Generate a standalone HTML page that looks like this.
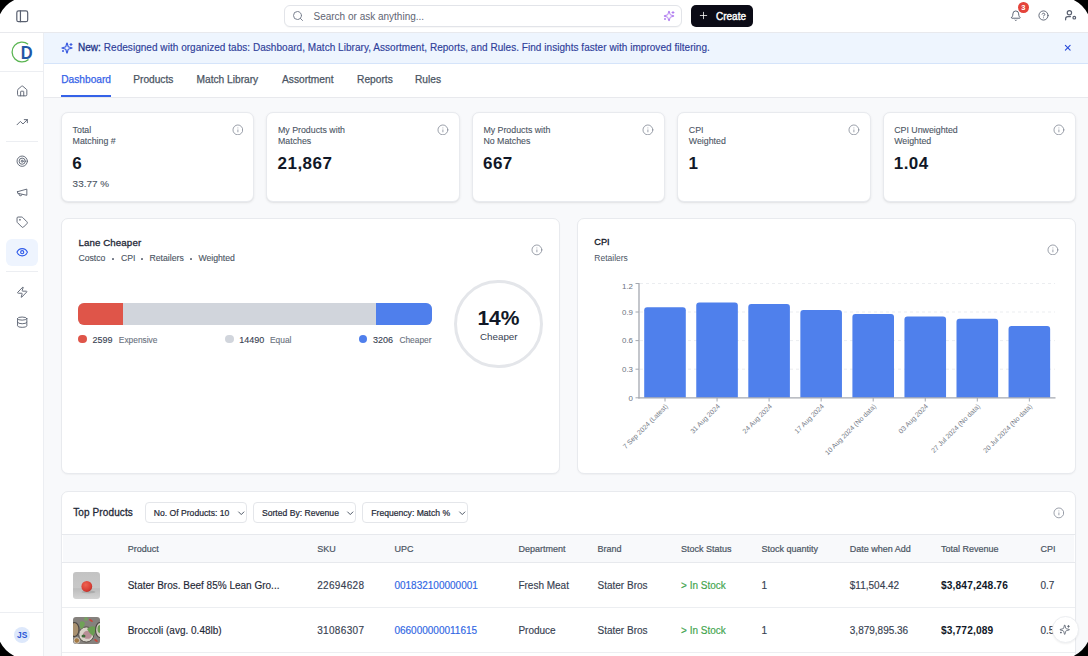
<!DOCTYPE html>
<html><head><meta charset="utf-8">
<style>
*{box-sizing:border-box;margin:0;padding:0}
html,body{width:1088px;height:656px;overflow:hidden;background:#000}
body{font-family:"Liberation Sans", sans-serif;color:#111827}
#win{position:absolute;left:0;top:0;width:1088px;height:656px;background:#f8f9fb;overflow:hidden}
.a{position:absolute}
.t{position:absolute;white-space:nowrap}
.card{position:absolute;background:#fff;border:1px solid #e8eaee;border-radius:7px;box-shadow:0 1px 1.5px rgba(0,0,0,.04)}
.kc{box-shadow:0 1px 3px rgba(0,0,0,.07),0 1px 1px rgba(0,0,0,.03)}
</style></head><body>
<div id="win">
<div class="a" style="left:0px;top:0px;width:1088px;height:32px;background:#fff"></div>
<div class="a" style="left:0px;top:32px;width:1088px;height:1px;background:#e8e9ed"></div>
<svg class="a" style="left:14.75px;top:8.55px;" width="14.5" height="14.5" viewBox="0 0 24 24" fill="none" stroke="#596070" stroke-width="2" stroke-linecap="round" stroke-linejoin="round"><rect width="18" height="18" x="3" y="3" rx="3"/><path d="M9 3v18"/></svg>
<div class="a" style="left:284px;top:5px;width:398px;height:22px;border:1px solid #e2e4e9;border-radius:6px;background:#fff;box-shadow:0 1px 1px rgba(0,0,0,.03)"></div>
<svg class="a" style="left:292.00px;top:9.50px;" width="12" height="12" viewBox="0 0 24 24" fill="none" stroke="#7a8190" stroke-width="2" stroke-linecap="round" stroke-linejoin="round"><circle cx="11" cy="11" r="8"/><path d="m21 21-4.3-4.3"/></svg>
<div class="t" style="left:313.50px;top:12.10px;font-size:10px;line-height:10px;color:#5f6573;">Search or ask anything...</div>
<svg class="a" style="left:663.00px;top:9.80px;" width="12" height="12" viewBox="0 0 24 24" fill="none" stroke="#b07cf0" stroke-width="2" stroke-linecap="round" stroke-linejoin="round"><path d="M9.937 15.5A2 2 0 0 0 8.5 14.063l-6.135-1.582a.5.5 0 0 1 0-.962L8.5 9.936A2 2 0 0 0 9.937 8.5l1.582-6.135a.5.5 0 0 1 .963 0L14.063 8.5A2 2 0 0 0 15.5 9.937l6.135 1.581a.5.5 0 0 1 0 .964L15.5 14.063a2 2 0 0 0-1.437 1.437l-1.582 6.135a.5.5 0 0 1-.963 0z"/><path d="M20 3v4"/><path d="M22 5h-4"/><path d="M4 17v2"/><path d="M5 18H3"/></svg>
<div class="a" style="left:691px;top:5px;width:62px;height:21.5px;border-radius:5px;background:#0b0b16"></div>
<svg class="a" style="left:697.80px;top:10.40px;" width="11" height="11" viewBox="0 0 24 24" fill="none" stroke="#fff" stroke-width="1.7" stroke-linecap="round" stroke-linejoin="round"><path d="M5 12h14"/><path d="M12 5v14"/></svg>
<div class="t" style="left:716.00px;top:12.00px;font-size:10px;line-height:10px;color:#fff;-webkit-text-stroke:0.4px currentColor">Create</div>
<svg class="a" style="left:1009.50px;top:10.20px;" width="11.6" height="11.6" viewBox="0 0 24 24" fill="none" stroke="#596070" stroke-width="2" stroke-linecap="round" stroke-linejoin="round"><path d="M10.268 21a2 2 0 0 0 3.464 0"/><path d="M3.262 15.326A1 1 0 0 0 4 17h16a1 1 0 0 0 .74-1.673C19.41 13.956 18 12.499 18 8A6 6 0 0 0 6 8c0 4.499-1.411 5.956-2.738 7.326"/></svg>
<div class="a" style="left:1018px;top:2.3px;width:10.8px;height:10.8px;border-radius:50%;background:#e4443b"></div>
<div class="t" style="left:823.40px;width:400px;text-align:center;top:4.02px;font-size:7.5px;line-height:7.5px;color:#fff;font-weight:700;">3</div>
<svg class="a" style="left:1037.60px;top:10.40px;" width="11" height="11" viewBox="0 0 24 24" fill="none" stroke="#596070" stroke-width="2" stroke-linecap="round" stroke-linejoin="round"><circle cx="12" cy="12" r="10"/><path d="M9.09 9a3 3 0 0 1 5.83 1c0 2-3 3-3 3"/><path d="M12 17h.01"/></svg>
<svg class="a" style="left:1064.00px;top:9.00px;" width="13" height="13" viewBox="0 0 24 24" fill="none" stroke="#596070" stroke-width="2.2" stroke-linecap="round" stroke-linejoin="round"><circle cx="10" cy="7" r="4"/><path d="M12 14H7a4 4 0 0 0-4 4v2"/><circle cx="19" cy="16" r="2.5"/></svg>
<div class="a" style="left:0px;top:33px;width:43px;height:623px;background:#fff"></div>
<div class="a" style="left:43px;top:33px;width:1px;height:623px;background:#eceef2"></div>
<svg class="a" style="left:9.9px;top:40.1px" width="24" height="24" viewBox="0 0 24 24" overflow="visible"><path d="M18.1 4.2 A9.9 9.9 0 1 0 18.5 19.47" fill="none" stroke="#5ab552" stroke-width="1.3"/><text transform="translate(10.7 18.65) scale(0.92 1)" x="0" y="0" font-family="Liberation Sans" font-weight="700" font-size="17.9" fill="#2157a6">D</text></svg>
<div class="a" style="left:0px;top:71px;width:43px;height:1px;background:#eceef2"></div>
<svg class="a" style="left:15.80px;top:84.80px;" width="12.4" height="12.4" viewBox="0 0 24 24" fill="none" stroke="#5b6271" stroke-width="1.8" stroke-linecap="round" stroke-linejoin="round"><path d="M15 21v-8a1 1 0 0 0-1-1h-4a1 1 0 0 0-1 1v8"/><path d="M3 10a2 2 0 0 1 .709-1.528l7-5.999a2 2 0 0 1 2.582 0l7 5.999A2 2 0 0 1 21 10v9a2 2 0 0 1-2 2H5a2 2 0 0 1-2-2z"/></svg>
<svg class="a" style="left:15.80px;top:115.80px;" width="12.4" height="12.4" viewBox="0 0 24 24" fill="none" stroke="#5b6271" stroke-width="1.8" stroke-linecap="round" stroke-linejoin="round"><polyline points="22 7 13.5 15.5 8.5 10.5 2 17"/><polyline points="16 7 22 7 22 13"/></svg>
<svg class="a" style="left:15.80px;top:155.00px;" width="12.4" height="12.4" viewBox="0 0 24 24" fill="none" stroke="#5b6271" stroke-width="1.8" stroke-linecap="round" stroke-linejoin="round"><circle cx="12" cy="12" r="10"/><circle cx="12" cy="12" r="6"/><circle cx="12" cy="12" r="2"/></svg>
<svg class="a" style="left:15.80px;top:185.50px;" width="12.4" height="12.4" viewBox="0 0 24 24" fill="none" stroke="#5b6271" stroke-width="1.8" stroke-linecap="round" stroke-linejoin="round"><path d="m3 11 18-5v12L3 14v-3z"/><path d="M11.6 16.8a3 3 0 1 1-5.8-1.6"/></svg>
<svg class="a" style="left:15.80px;top:215.80px;" width="12.4" height="12.4" viewBox="0 0 24 24" fill="none" stroke="#5b6271" stroke-width="1.8" stroke-linecap="round" stroke-linejoin="round"><path d="M12.586 2.586A2 2 0 0 0 11.172 2H4a2 2 0 0 0-2 2v7.172a2 2 0 0 0 .586 1.414l8.704 8.704a2.426 2.426 0 0 0 3.42 0l6.58-6.58a2.426 2.426 0 0 0 0-3.42z"/><circle cx="7.5" cy="7.5" r=".5" fill="#5b6271"/></svg>
<svg class="a" style="left:15.80px;top:285.80px;" width="12.4" height="12.4" viewBox="0 0 24 24" fill="none" stroke="#5b6271" stroke-width="1.8" stroke-linecap="round" stroke-linejoin="round"><path d="M4 14a1 1 0 0 1-.78-1.63l9.9-10.2a.5.5 0 0 1 .86.46l-1.92 6.02A1 1 0 0 0 13 10h7a1 1 0 0 1 .78 1.63l-9.9 10.2a.5.5 0 0 1-.86-.46l1.92-6.02A1 1 0 0 0 11 14z"/></svg>
<svg class="a" style="left:15.80px;top:315.80px;" width="12.4" height="12.4" viewBox="0 0 24 24" fill="none" stroke="#5b6271" stroke-width="1.8" stroke-linecap="round" stroke-linejoin="round"><ellipse cx="12" cy="5" rx="9" ry="3"/><path d="M3 5V19A9 3 0 0 0 21 19V5"/><path d="M3 12A9 3 0 0 0 21 12"/></svg>
<div class="a" style="left:6px;top:141px;width:32px;height:1px;background:#eceef2"></div>
<div class="a" style="left:6px;top:239px;width:32px;height:27px;background:#eef4fe;border-radius:6px"></div>
<svg class="a" style="left:15.80px;top:246.00px;" width="12.4" height="12.4" viewBox="0 0 24 24" fill="none" stroke="#2f5bea" stroke-width="2.2" stroke-linecap="round" stroke-linejoin="round"><path d="M2.062 12.348a1 1 0 0 1 0-.696 10.75 10.75 0 0 1 19.876 0 1 1 0 0 1 0 .696 10.75 10.75 0 0 1-19.876 0"/><circle cx="12" cy="12" r="3"/></svg>
<div class="a" style="left:6px;top:271px;width:32px;height:1px;background:#eceef2"></div>
<div class="a" style="left:0px;top:612px;width:43px;height:1px;background:#eceef2"></div>
<div class="a" style="left:13.8px;top:626.8px;width:16.4px;height:16.4px;border-radius:50%;background:#dde8fb"></div>
<div class="t" style="left:-177.80px;width:400px;text-align:center;top:630.80px;font-size:8.4px;line-height:8.4px;color:#2a55d6;font-weight:700;">JS</div>
<div class="a" style="left:44px;top:33px;width:1044px;height:30px;background:#eef5fe"></div>
<div class="a" style="left:44px;top:63px;width:1044px;height:1px;background:#d5e4fa"></div>
<svg class="a" style="left:60.50px;top:42.00px;" width="12" height="12" viewBox="0 0 24 24" fill="none" stroke="#3a5be0" stroke-width="2.3" stroke-linecap="round" stroke-linejoin="round"><path d="M9.937 15.5A2 2 0 0 0 8.5 14.063l-6.135-1.582a.5.5 0 0 1 0-.962L8.5 9.936A2 2 0 0 0 9.937 8.5l1.582-6.135a.5.5 0 0 1 .963 0L14.063 8.5A2 2 0 0 0 15.5 9.937l6.135 1.581a.5.5 0 0 1 0 .964L15.5 14.063a2 2 0 0 0-1.437 1.437l-1.582 6.135a.5.5 0 0 1-.963 0z"/><path d="M20 3v4"/><path d="M22 5h-4"/><path d="M4 17v2"/><path d="M5 18H3"/></svg>
<div class="t" style="left:78.00px;top:43.49px;font-size:10px;line-height:10px;color:#2e409a;letter-spacing:0.04px;-webkit-text-stroke:0.15px currentColor"><b style="color:#24358a;font-weight:400;-webkit-text-stroke:0.3px #24358a">New:</b> Redesigned with organized tabs: Dashboard, Match Library, Assortment, Reports, and Rules. Find insights faster with improved filtering.</div>
<svg class="a" style="left:1063.05px;top:43.15px;" width="9.5" height="9.5" viewBox="0 0 24 24" fill="none" stroke="#2448d8" stroke-width="2.6" stroke-linecap="round" stroke-linejoin="round"><path d="M18 6 6 18"/><path d="m6 6 12 12"/></svg>
<div class="a" style="left:44px;top:64px;width:1044px;height:33px;background:#fff"></div>
<div class="a" style="left:44px;top:97px;width:1044px;height:1px;background:#e8e9ed"></div>
<div class="t" style="left:61.20px;top:75.17px;font-size:10.2px;line-height:10.2px;color:#3562e8;-webkit-text-stroke:0.25px currentColor">Dashboard</div>
<div class="t" style="left:133.20px;top:75.17px;font-size:10.2px;line-height:10.2px;color:#4b5563;-webkit-text-stroke:0.25px currentColor">Products</div>
<div class="t" style="left:196.50px;top:75.17px;font-size:10.2px;line-height:10.2px;color:#4b5563;-webkit-text-stroke:0.25px currentColor">Match Library</div>
<div class="t" style="left:282.00px;top:75.17px;font-size:10.2px;line-height:10.2px;color:#4b5563;-webkit-text-stroke:0.25px currentColor">Assortment</div>
<div class="t" style="left:357.10px;top:75.17px;font-size:10.2px;line-height:10.2px;color:#4b5563;-webkit-text-stroke:0.25px currentColor">Reports</div>
<div class="t" style="left:415.00px;top:75.17px;font-size:10.2px;line-height:10.2px;color:#4b5563;-webkit-text-stroke:0.25px currentColor">Rules</div>
<div class="a" style="left:61px;top:95px;width:50px;height:2px;background:#3562e8"></div>
<div class="card kc" style="left:61px;top:112px;width:193.4px;height:90px"></div>
<div class="t" style="left:72.60px;top:126.25px;font-size:8.8px;line-height:8.8px;color:#4b5563;-webkit-text-stroke:0.1px currentColor;line-height:11.2px;top:125.05px">Total<br>Matching #</div>
<div class="t" style="left:72.20px;top:155.08px;font-size:17px;line-height:17px;color:#111827;font-weight:700;letter-spacing:0.45px">6</div>
<div class="t" style="left:72.60px;top:178.91px;font-size:9.9px;line-height:9.9px;color:#4b5563;letter-spacing:0.05px;-webkit-text-stroke:0.12px currentColor">33.77 %</div>
<svg class="a" style="left:231.60px;top:123.50px;" width="11.8" height="11.8" viewBox="0 0 24 24" fill="none" stroke="#7d8391" stroke-width="1.55" stroke-linecap="round" stroke-linejoin="round"><circle cx="12" cy="12" r="10"/><path d="M12 16v-4"/><path d="M12 8h.01"/></svg>
<div class="card kc" style="left:266.4px;top:112px;width:193.4px;height:90px"></div>
<div class="t" style="left:278.00px;top:126.25px;font-size:8.8px;line-height:8.8px;color:#4b5563;-webkit-text-stroke:0.1px currentColor;line-height:11.2px;top:125.05px">My Products with<br>Matches</div>
<div class="t" style="left:277.60px;top:155.08px;font-size:17px;line-height:17px;color:#111827;font-weight:700;letter-spacing:0.45px">21,867</div>
<svg class="a" style="left:437.00px;top:123.50px;" width="11.8" height="11.8" viewBox="0 0 24 24" fill="none" stroke="#7d8391" stroke-width="1.55" stroke-linecap="round" stroke-linejoin="round"><circle cx="12" cy="12" r="10"/><path d="M12 16v-4"/><path d="M12 8h.01"/></svg>
<div class="card kc" style="left:471.8px;top:112px;width:193.4px;height:90px"></div>
<div class="t" style="left:483.40px;top:126.25px;font-size:8.8px;line-height:8.8px;color:#4b5563;-webkit-text-stroke:0.1px currentColor;line-height:11.2px;top:125.05px">My Products with<br>No Matches</div>
<div class="t" style="left:483.00px;top:155.08px;font-size:17px;line-height:17px;color:#111827;font-weight:700;letter-spacing:0.45px">667</div>
<svg class="a" style="left:642.40px;top:123.50px;" width="11.8" height="11.8" viewBox="0 0 24 24" fill="none" stroke="#7d8391" stroke-width="1.55" stroke-linecap="round" stroke-linejoin="round"><circle cx="12" cy="12" r="10"/><path d="M12 16v-4"/><path d="M12 8h.01"/></svg>
<div class="card kc" style="left:677.2px;top:112px;width:193.4px;height:90px"></div>
<div class="t" style="left:688.80px;top:126.25px;font-size:8.8px;line-height:8.8px;color:#4b5563;-webkit-text-stroke:0.1px currentColor;line-height:11.2px;top:125.05px">CPI<br>Weighted</div>
<div class="t" style="left:688.40px;top:155.08px;font-size:17px;line-height:17px;color:#111827;font-weight:700;letter-spacing:0.45px">1</div>
<svg class="a" style="left:847.80px;top:123.50px;" width="11.8" height="11.8" viewBox="0 0 24 24" fill="none" stroke="#7d8391" stroke-width="1.55" stroke-linecap="round" stroke-linejoin="round"><circle cx="12" cy="12" r="10"/><path d="M12 16v-4"/><path d="M12 8h.01"/></svg>
<div class="card kc" style="left:882.6px;top:112px;width:193.4px;height:90px"></div>
<div class="t" style="left:894.20px;top:126.25px;font-size:8.8px;line-height:8.8px;color:#4b5563;-webkit-text-stroke:0.1px currentColor;line-height:11.2px;top:125.05px">CPI Unweighted<br>Weighted</div>
<div class="t" style="left:893.80px;top:155.08px;font-size:17px;line-height:17px;color:#111827;font-weight:700;letter-spacing:0.45px">1.04</div>
<svg class="a" style="left:1053.20px;top:123.50px;" width="11.8" height="11.8" viewBox="0 0 24 24" fill="none" stroke="#7d8391" stroke-width="1.55" stroke-linecap="round" stroke-linejoin="round"><circle cx="12" cy="12" r="10"/><path d="M12 16v-4"/><path d="M12 8h.01"/></svg>
<div class="card" style="left:61px;top:218px;width:499px;height:256px"></div>
<div class="t" style="left:78.40px;top:238.03px;font-size:9.7px;line-height:9.7px;color:#1f2937;-webkit-text-stroke:0.3px currentColor;letter-spacing:0.12px">Lane Cheaper</div>
<div class="t" style="left:78.40px;top:254.26px;font-size:8.7px;line-height:8.7px;color:#4b5563;-webkit-text-stroke:0.12px currentColor">Costco</div>
<div class="t" style="left:121.00px;top:254.26px;font-size:8.7px;line-height:8.7px;color:#4b5563;-webkit-text-stroke:0.12px currentColor">CPI</div>
<div class="t" style="left:149.50px;top:254.26px;font-size:8.7px;line-height:8.7px;color:#4b5563;-webkit-text-stroke:0.12px currentColor">Retailers</div>
<div class="t" style="left:198.40px;top:254.26px;font-size:8.7px;line-height:8.7px;color:#4b5563;-webkit-text-stroke:0.12px currentColor">Weighted</div>
<div class="a" style="left:112.45px;top:258.3px;width:1.6999999999999886px;height:1.6999999999999886px;background:#6b7280;border-radius:50%"></div>
<div class="a" style="left:141.35px;top:258.3px;width:1.6999999999999886px;height:1.6999999999999886px;background:#6b7280;border-radius:50%"></div>
<div class="a" style="left:190.05px;top:258.3px;width:1.6999999999999886px;height:1.6999999999999886px;background:#6b7280;border-radius:50%"></div>
<svg class="a" style="left:531.20px;top:244.00px;" width="11.8" height="11.8" viewBox="0 0 24 24" fill="none" stroke="#7d8391" stroke-width="1.55" stroke-linecap="round" stroke-linejoin="round"><circle cx="12" cy="12" r="10"/><path d="M12 16v-4"/><path d="M12 8h.01"/></svg>
<div class="a" style="left:78px;top:303.1px;width:354px;height:22.2px;border-radius:6px;overflow:hidden;background:#d1d5dc"><div class="a" style="left:0;top:0;width:45.4px;height:22px;background:#df5549"></div><div class="a" style="left:297.7px;top:0;width:57px;height:22px;background:#4f7fec"></div></div>
<div class="a" style="left:78.20px;top:335.1px;width:8.4px;height:8.4px;border-radius:50%;background:#df5549"></div>
<div class="a" style="left:225.30px;top:335.1px;width:8.4px;height:8.4px;border-radius:50%;background:#d1d5dc"></div>
<div class="a" style="left:358.80px;top:335.1px;width:8.4px;height:8.4px;border-radius:50%;background:#4f7fec"></div>
<div class="t" style="left:92.50px;top:335.53px;font-size:9px;line-height:9px;color:#374151;-webkit-text-stroke:0.12px currentColor">2599</div>
<div class="t" style="left:118.80px;top:335.60px;font-size:8.4px;line-height:8.4px;color:#6b7280;-webkit-text-stroke:0.12px currentColor">Expensive</div>
<div class="t" style="left:239.20px;top:335.53px;font-size:9px;line-height:9px;color:#374151;-webkit-text-stroke:0.12px currentColor">14490</div>
<div class="t" style="left:270.00px;top:335.60px;font-size:8.4px;line-height:8.4px;color:#6b7280;-webkit-text-stroke:0.12px currentColor">Equal</div>
<div class="t" style="left:373.00px;top:335.53px;font-size:9px;line-height:9px;color:#374151;-webkit-text-stroke:0.12px currentColor">3206</div>
<div class="t" style="left:399.40px;top:335.60px;font-size:8.4px;line-height:8.4px;color:#6b7280;-webkit-text-stroke:0.12px currentColor">Cheaper</div>
<div class="a" style="left:454.2px;top:279.8px;width:88.5px;height:88.5px;border-radius:50%;border:3px solid #e4e6ea"></div>
<div class="t" style="left:298.40px;width:400px;text-align:center;top:307.26px;font-size:21px;line-height:21px;color:#111827;font-weight:700;">14%</div>
<div class="t" style="left:298.80px;width:400px;text-align:center;top:331.92px;font-size:9.8px;line-height:9.8px;color:#374151;">Cheaper</div>
<div class="card" style="left:577px;top:218px;width:499px;height:256px"></div>
<div class="t" style="left:594.30px;top:238.10px;font-size:9.2px;line-height:9.2px;color:#111827;-webkit-text-stroke:0.3px currentColor">CPI</div>
<div class="t" style="left:594.30px;top:253.79px;font-size:8.5px;line-height:8.5px;color:#4b5563;">Retailers</div>
<svg class="a" style="left:1047.10px;top:243.70px;" width="11.8" height="11.8" viewBox="0 0 24 24" fill="none" stroke="#7d8391" stroke-width="1.55" stroke-linecap="round" stroke-linejoin="round"><circle cx="12" cy="12" r="10"/><path d="M12 16v-4"/><path d="M12 8h.01"/></svg>
<svg class="a" style="left:0;top:0" width="1088" height="656"><line x1="640" y1="283.5" x2="1055" y2="283.5" stroke="#e6e8ec" stroke-width="0.8" stroke-dasharray="3 3"/><line x1="635.5" y1="283.5" x2="639" y2="283.5" stroke="#a4a8b0" stroke-width="1"/><text x="633" y="288.5" text-anchor="end" font-family="Liberation Sans" font-size="7.9" fill="#6b7280">1.2</text><line x1="640" y1="312.0" x2="1055" y2="312.0" stroke="#e6e8ec" stroke-width="0.8" stroke-dasharray="3 3"/><line x1="635.5" y1="312.0" x2="639" y2="312.0" stroke="#a4a8b0" stroke-width="1"/><text x="633" y="314.7" text-anchor="end" font-family="Liberation Sans" font-size="7.9" fill="#6b7280">0.9</text><line x1="640" y1="340.6" x2="1055" y2="340.6" stroke="#e6e8ec" stroke-width="0.8" stroke-dasharray="3 3"/><line x1="635.5" y1="340.6" x2="639" y2="340.6" stroke="#a4a8b0" stroke-width="1"/><text x="633" y="343.3" text-anchor="end" font-family="Liberation Sans" font-size="7.9" fill="#6b7280">0.6</text><line x1="640" y1="369.2" x2="1055" y2="369.2" stroke="#e6e8ec" stroke-width="0.8" stroke-dasharray="3 3"/><line x1="635.5" y1="369.2" x2="639" y2="369.2" stroke="#a4a8b0" stroke-width="1"/><text x="633" y="371.9" text-anchor="end" font-family="Liberation Sans" font-size="7.9" fill="#6b7280">0.3</text><line x1="635.5" y1="397.8" x2="639" y2="397.8" stroke="#a4a8b0" stroke-width="1"/><text x="633" y="400.5" text-anchor="end" font-family="Liberation Sans" font-size="7.9" fill="#6b7280">0</text><path d="M644.2 397.8 V310.3 Q644.2 307.3 647.2 307.3 H682.8000000000001 Q685.8000000000001 307.3 685.8000000000001 310.3 V397.8 Z" fill="#4f80ec"/><line x1="665.0" y1="397.8" x2="665.0" y2="401.5" stroke="#a4a8b0" stroke-width="1"/><text transform="translate(668.3 406.8) rotate(-45)" text-anchor="end" font-family="Liberation Sans" font-size="6.85" fill="#757b87">7 Sep 2024 (Latest)</text><path d="M696.25 397.8 V305.4 Q696.25 302.4 699.25 302.4 H734.85 Q737.85 302.4 737.85 305.4 V397.8 Z" fill="#4f80ec"/><line x1="717.05" y1="397.8" x2="717.05" y2="401.5" stroke="#a4a8b0" stroke-width="1"/><text transform="translate(720.3499999999999 406.8) rotate(-45)" text-anchor="end" font-family="Liberation Sans" font-size="6.85" fill="#757b87">31 Aug 2024</text><path d="M748.3000000000001 397.8 V307.1 Q748.3000000000001 304.1 751.3000000000001 304.1 H786.9000000000001 Q789.9000000000001 304.1 789.9000000000001 307.1 V397.8 Z" fill="#4f80ec"/><line x1="769.1" y1="397.8" x2="769.1" y2="401.5" stroke="#a4a8b0" stroke-width="1"/><text transform="translate(772.4 406.8) rotate(-45)" text-anchor="end" font-family="Liberation Sans" font-size="6.85" fill="#757b87">24 Aug 2024</text><path d="M800.35 397.8 V313 Q800.35 310 803.35 310 H838.95 Q841.95 310 841.95 313 V397.8 Z" fill="#4f80ec"/><line x1="821.15" y1="397.8" x2="821.15" y2="401.5" stroke="#a4a8b0" stroke-width="1"/><text transform="translate(824.4499999999999 406.8) rotate(-45)" text-anchor="end" font-family="Liberation Sans" font-size="6.85" fill="#757b87">17 Aug 2024</text><path d="M852.4000000000001 397.8 V317 Q852.4000000000001 314 855.4000000000001 314 H891.0000000000001 Q894.0000000000001 314 894.0000000000001 317 V397.8 Z" fill="#4f80ec"/><line x1="873.2" y1="397.8" x2="873.2" y2="401.5" stroke="#a4a8b0" stroke-width="1"/><text transform="translate(876.5 406.8) rotate(-45)" text-anchor="end" font-family="Liberation Sans" font-size="6.85" fill="#757b87">10 Aug 2024 (No data)</text><path d="M904.45 397.8 V319.6 Q904.45 316.6 907.45 316.6 H943.0500000000001 Q946.0500000000001 316.6 946.0500000000001 319.6 V397.8 Z" fill="#4f80ec"/><line x1="925.25" y1="397.8" x2="925.25" y2="401.5" stroke="#a4a8b0" stroke-width="1"/><text transform="translate(928.55 406.8) rotate(-45)" text-anchor="end" font-family="Liberation Sans" font-size="6.85" fill="#757b87">03 Aug 2024</text><path d="M956.5 397.8 V321.8 Q956.5 318.8 959.5 318.8 H995.1 Q998.1 318.8 998.1 321.8 V397.8 Z" fill="#4f80ec"/><line x1="977.3" y1="397.8" x2="977.3" y2="401.5" stroke="#a4a8b0" stroke-width="1"/><text transform="translate(980.5999999999999 406.8) rotate(-45)" text-anchor="end" font-family="Liberation Sans" font-size="6.85" fill="#757b87">27 Jul 2024 (No data)</text><path d="M1008.55 397.8 V329 Q1008.55 326 1011.55 326 H1047.1499999999999 Q1050.1499999999999 326 1050.1499999999999 329 V397.8 Z" fill="#4f80ec"/><line x1="1029.35" y1="397.8" x2="1029.35" y2="401.5" stroke="#a4a8b0" stroke-width="1"/><text transform="translate(1032.6499999999999 406.8) rotate(-45)" text-anchor="end" font-family="Liberation Sans" font-size="6.85" fill="#757b87">20 Jul 2024 (No data)</text><line x1="639" y1="283" x2="639" y2="398.5" stroke="#a4a8b0" stroke-width="1.3"/><line x1="638.5" y1="397.8" x2="1055.5" y2="397.8" stroke="#a4a8b0" stroke-width="1.3"/></svg>
<div class="card" style="left:61px;top:491px;width:1015px;height:200px"></div>
<div class="t" style="left:73.20px;top:508.30px;font-size:10px;line-height:10px;color:#1f2937;-webkit-text-stroke:0.3px currentColor;letter-spacing:0.12px">Top Products</div>
<div class="a" style="left:144.5px;top:502.3px;width:102.5px;height:20.3px;border:1px solid #e4e6ea;border-radius:4px;background:#fff"></div>
<div class="t" style="left:153.80px;top:509.08px;font-size:8.6px;line-height:8.6px;color:#1f2937;-webkit-text-stroke:0.2px currentColor">No. Of Products: 10</div>
<svg class="a" style="left:235.95px;top:507.65px;" width="10.5" height="10.5" viewBox="0 0 24 24" fill="none" stroke="#374151" stroke-width="2" stroke-linecap="round" stroke-linejoin="round"><path d="m6 9 6 6 6-6"/></svg>
<div class="a" style="left:253.3px;top:502.3px;width:103.0px;height:20.3px;border:1px solid #e4e6ea;border-radius:4px;background:#fff"></div>
<div class="t" style="left:262.00px;top:509.08px;font-size:8.6px;line-height:8.6px;color:#1f2937;-webkit-text-stroke:0.2px currentColor">Sorted By: Revenue</div>
<svg class="a" style="left:345.25px;top:507.65px;" width="10.5" height="10.5" viewBox="0 0 24 24" fill="none" stroke="#374151" stroke-width="2" stroke-linecap="round" stroke-linejoin="round"><path d="m6 9 6 6 6-6"/></svg>
<div class="a" style="left:362.4px;top:502.3px;width:105.9px;height:20.3px;border:1px solid #e4e6ea;border-radius:4px;background:#fff"></div>
<div class="t" style="left:371.30px;top:509.08px;font-size:8.6px;line-height:8.6px;color:#1f2937;-webkit-text-stroke:0.2px currentColor">Frequency: Match %</div>
<svg class="a" style="left:457.25px;top:507.65px;" width="10.5" height="10.5" viewBox="0 0 24 24" fill="none" stroke="#374151" stroke-width="2" stroke-linecap="round" stroke-linejoin="round"><path d="m6 9 6 6 6-6"/></svg>
<svg class="a" style="left:1052.60px;top:506.80px;" width="11.8" height="11.8" viewBox="0 0 24 24" fill="none" stroke="#7d8391" stroke-width="1.55" stroke-linecap="round" stroke-linejoin="round"><circle cx="12" cy="12" r="10"/><path d="M12 16v-4"/><path d="M12 8h.01"/></svg>
<div class="a" style="left:62px;top:533.5px;width:1013px;height:1.0px;background:#e7e9ed"></div>
<div class="a" style="left:63px;top:534.5px;width:1011px;height:27.5px;background:#f8f9fb"></div>
<div class="a" style="left:62px;top:562px;width:1013px;height:1px;background:#e7e9ed"></div>
<div class="t" style="left:127.70px;top:544.83px;font-size:9px;line-height:9px;color:#4b5563;-webkit-text-stroke:0.2px currentColor">Product</div>
<div class="t" style="left:317.20px;top:544.83px;font-size:9px;line-height:9px;color:#4b5563;-webkit-text-stroke:0.2px currentColor">SKU</div>
<div class="t" style="left:394.40px;top:544.83px;font-size:9px;line-height:9px;color:#4b5563;-webkit-text-stroke:0.2px currentColor">UPC</div>
<div class="t" style="left:518.40px;top:544.83px;font-size:9px;line-height:9px;color:#4b5563;-webkit-text-stroke:0.2px currentColor">Department</div>
<div class="t" style="left:597.50px;top:544.83px;font-size:9px;line-height:9px;color:#4b5563;-webkit-text-stroke:0.2px currentColor">Brand</div>
<div class="t" style="left:681.10px;top:544.83px;font-size:9px;line-height:9px;color:#4b5563;-webkit-text-stroke:0.2px currentColor">Stock Status</div>
<div class="t" style="left:761.50px;top:544.83px;font-size:9px;line-height:9px;color:#4b5563;-webkit-text-stroke:0.2px currentColor">Stock quantity</div>
<div class="t" style="left:849.80px;top:544.83px;font-size:9px;line-height:9px;color:#4b5563;-webkit-text-stroke:0.2px currentColor">Date when Add</div>
<div class="t" style="left:940.90px;top:544.83px;font-size:9px;line-height:9px;color:#4b5563;-webkit-text-stroke:0.2px currentColor">Total Revenue</div>
<div class="t" style="left:1040.40px;top:544.83px;font-size:9px;line-height:9px;color:#4b5563;-webkit-text-stroke:0.2px currentColor">CPI</div>
<div class="t" style="left:127.70px;top:581.10px;font-size:10px;line-height:10px;color:#1f2937;-webkit-text-stroke:0.15px currentColor">Stater Bros. Beef 85% Lean Gro...</div>
<div class="t" style="left:317.20px;top:581.10px;font-size:10px;line-height:10px;color:#374151;letter-spacing:0.33px;-webkit-text-stroke:0.15px currentColor">22694628</div>
<div class="t" style="left:394.40px;top:581.10px;font-size:10px;line-height:10px;color:#2f66e4;-webkit-text-stroke:0.15px currentColor">001832100000001</div>
<div class="t" style="left:518.40px;top:581.10px;font-size:10px;line-height:10px;color:#374151;-webkit-text-stroke:0.15px currentColor">Fresh Meat</div>
<div class="t" style="left:597.50px;top:581.10px;font-size:10px;line-height:10px;color:#374151;-webkit-text-stroke:0.15px currentColor">Stater Bros</div>
<div class="t" style="left:681.10px;top:581.10px;font-size:10px;line-height:10px;color:#3ea34c;-webkit-text-stroke:0.15px currentColor">&gt; In Stock</div>
<div class="t" style="left:761.50px;top:581.10px;font-size:10px;line-height:10px;color:#374151;-webkit-text-stroke:0.15px currentColor">1</div>
<div class="t" style="left:849.80px;top:581.10px;font-size:10px;line-height:10px;color:#374151;-webkit-text-stroke:0.15px currentColor">$11,504.42</div>
<div class="t" style="left:940.90px;top:581.07px;font-size:10.2px;line-height:10.2px;color:#111827;font-weight:700;letter-spacing:0.15px;">$3,847,248.76</div>
<div class="t" style="left:1040.40px;top:581.10px;font-size:10px;line-height:10px;color:#374151;-webkit-text-stroke:0.15px currentColor">0.7</div>
<svg class="a" style="left:73px;top:571.7px" width="27" height="27" viewBox="0 0 27 27"><defs><clipPath id="ca"><rect width="27" height="27" rx="3"/></clipPath><linearGradient id="ga" x1="0" y1="0" x2="0" y2="1"><stop offset="0" stop-color="#c3c3c3"/><stop offset="0.58" stop-color="#c8c8c8"/><stop offset="0.62" stop-color="#bdbdbd"/><stop offset="1" stop-color="#d4d4d4"/></linearGradient><radialGradient id="ra" cx="0.4" cy="0.35" r="0.7"><stop offset="0" stop-color="#ee6352"/><stop offset="0.7" stop-color="#d93f35"/><stop offset="1" stop-color="#b9302a"/></radialGradient></defs><g clip-path="url(#ca)"><rect width="27" height="27" fill="url(#ga)"/><ellipse cx="15.5" cy="20" rx="7" ry="1.4" fill="rgba(0,0,0,.12)"/><ellipse cx="13.8" cy="14.4" rx="5.4" ry="5.5" fill="url(#ra)"/></g></svg>
<div class="t" style="left:127.70px;top:625.80px;font-size:10px;line-height:10px;color:#1f2937;-webkit-text-stroke:0.15px currentColor">Broccoli (avg. 0.48lb)</div>
<div class="t" style="left:317.20px;top:625.80px;font-size:10px;line-height:10px;color:#374151;letter-spacing:0.33px;-webkit-text-stroke:0.15px currentColor">31086307</div>
<div class="t" style="left:394.40px;top:625.80px;font-size:10px;line-height:10px;color:#2f66e4;-webkit-text-stroke:0.15px currentColor">066000000011615</div>
<div class="t" style="left:518.40px;top:625.80px;font-size:10px;line-height:10px;color:#374151;-webkit-text-stroke:0.15px currentColor">Produce</div>
<div class="t" style="left:597.50px;top:625.80px;font-size:10px;line-height:10px;color:#374151;-webkit-text-stroke:0.15px currentColor">Stater Bros</div>
<div class="t" style="left:681.10px;top:625.80px;font-size:10px;line-height:10px;color:#3ea34c;-webkit-text-stroke:0.15px currentColor">&gt; In Stock</div>
<div class="t" style="left:761.50px;top:625.80px;font-size:10px;line-height:10px;color:#374151;-webkit-text-stroke:0.15px currentColor">1</div>
<div class="t" style="left:849.80px;top:625.80px;font-size:10px;line-height:10px;color:#374151;-webkit-text-stroke:0.15px currentColor">3,879,895.36</div>
<div class="t" style="left:940.90px;top:625.77px;font-size:10.2px;line-height:10.2px;color:#111827;font-weight:700;letter-spacing:0.15px;">$3,772,089</div>
<div class="t" style="left:1040.40px;top:625.80px;font-size:10px;line-height:10px;color:#374151;-webkit-text-stroke:0.15px currentColor">0.5</div>
<svg class="a" style="left:73px;top:616.8px" width="27" height="27" viewBox="0 0 27 27"><defs><clipPath id="cb"><rect width="27" height="27" rx="3"/></clipPath></defs><g clip-path="url(#cb)"><rect width="27" height="27" fill="#85817d"/><ellipse cx="1.5" cy="12.5" rx="4.5" ry="7" fill="#a8906f" stroke="#4a4540" stroke-width="1.2"/><ellipse cx="27" cy="13" rx="4.5" ry="7.5" fill="#cfc9bf" stroke="#4a4540" stroke-width="1.2"/><ellipse cx="27" cy="12" rx="2.5" ry="4" fill="#6f9d55"/><circle cx="13.3" cy="17.5" r="7.6" fill="#d8d3c9" stroke="#55504a" stroke-width="1"/><ellipse cx="14.5" cy="17.8" rx="4.5" ry="4" fill="#b88f97"/><ellipse cx="10.5" cy="19" rx="2" ry="1.5" fill="#3f6a3a"/><path d="M14 12 Q18 8 22 10 Q23 15 20 19 Q16 16 14 12Z" fill="#6a9e52"/><path d="M7 5 Q10 3 12 6 Q11 11 8 12 Q6 9 7 5Z" fill="#6fa257"/><ellipse cx="18" cy="3.5" rx="2.2" ry="1" fill="#c8453a" transform="rotate(35 18 3.5)"/><ellipse cx="23" cy="23.5" rx="2" ry="1" fill="#c8453a" transform="rotate(35 23 23.5)"/><circle cx="3.8" cy="23.5" r="2.8" fill="#a37a45" stroke="#e0dcd5" stroke-width="0.8"/><circle cx="13" cy="2" r="2" fill="#78a062"/></g></svg>
<div class="a" style="left:62px;top:607.2px;width:1013px;height:1.0px;background:#eceef1"></div>
<div class="a" style="left:62px;top:652.2px;width:1013px;height:1.0px;background:#eceef1"></div>
<div class="a" style="left:1051.5px;top:616px;width:27.2px;height:27.2px;border-radius:50%;background:#fff;border:1px solid #eceef1;box-shadow:0 1px 2px rgba(0,0,0,.06)"></div>
<svg class="a" style="left:1059.40px;top:623.80px;" width="11.4" height="11.4" viewBox="0 0 24 24" fill="none" stroke="#555c6a" stroke-width="1.65" stroke-linecap="round" stroke-linejoin="round"><path d="M9.937 15.5A2 2 0 0 0 8.5 14.063l-6.135-1.582a.5.5 0 0 1 0-.962L8.5 9.936A2 2 0 0 0 9.937 8.5l1.582-6.135a.5.5 0 0 1 .963 0L14.063 8.5A2 2 0 0 0 15.5 9.937l6.135 1.581a.5.5 0 0 1 0 .964L15.5 14.063a2 2 0 0 0-1.437 1.437l-1.582 6.135a.5.5 0 0 1-.963 0z"/><path d="M20 3v4"/><path d="M22 5h-4"/><path d="M4 17v2"/><path d="M5 18H3"/></svg>
<svg class="a" style="left:0;top:0" width="1088" height="656"><path d="M0 0H14.2Q4.8 4.8 0 14.2Z" fill="#000"/><path d="M1088 0H1073.8Q1083.2 4.8 1088 14.2Z" fill="#000"/><path d="M0 656H14.2Q4.8 651.2 0 641.8Z" fill="#000"/><path d="M1088 656H1073.8Q1083.2 651.2 1088 641.8Z" fill="#000"/></svg>
</div>
</body></html>
